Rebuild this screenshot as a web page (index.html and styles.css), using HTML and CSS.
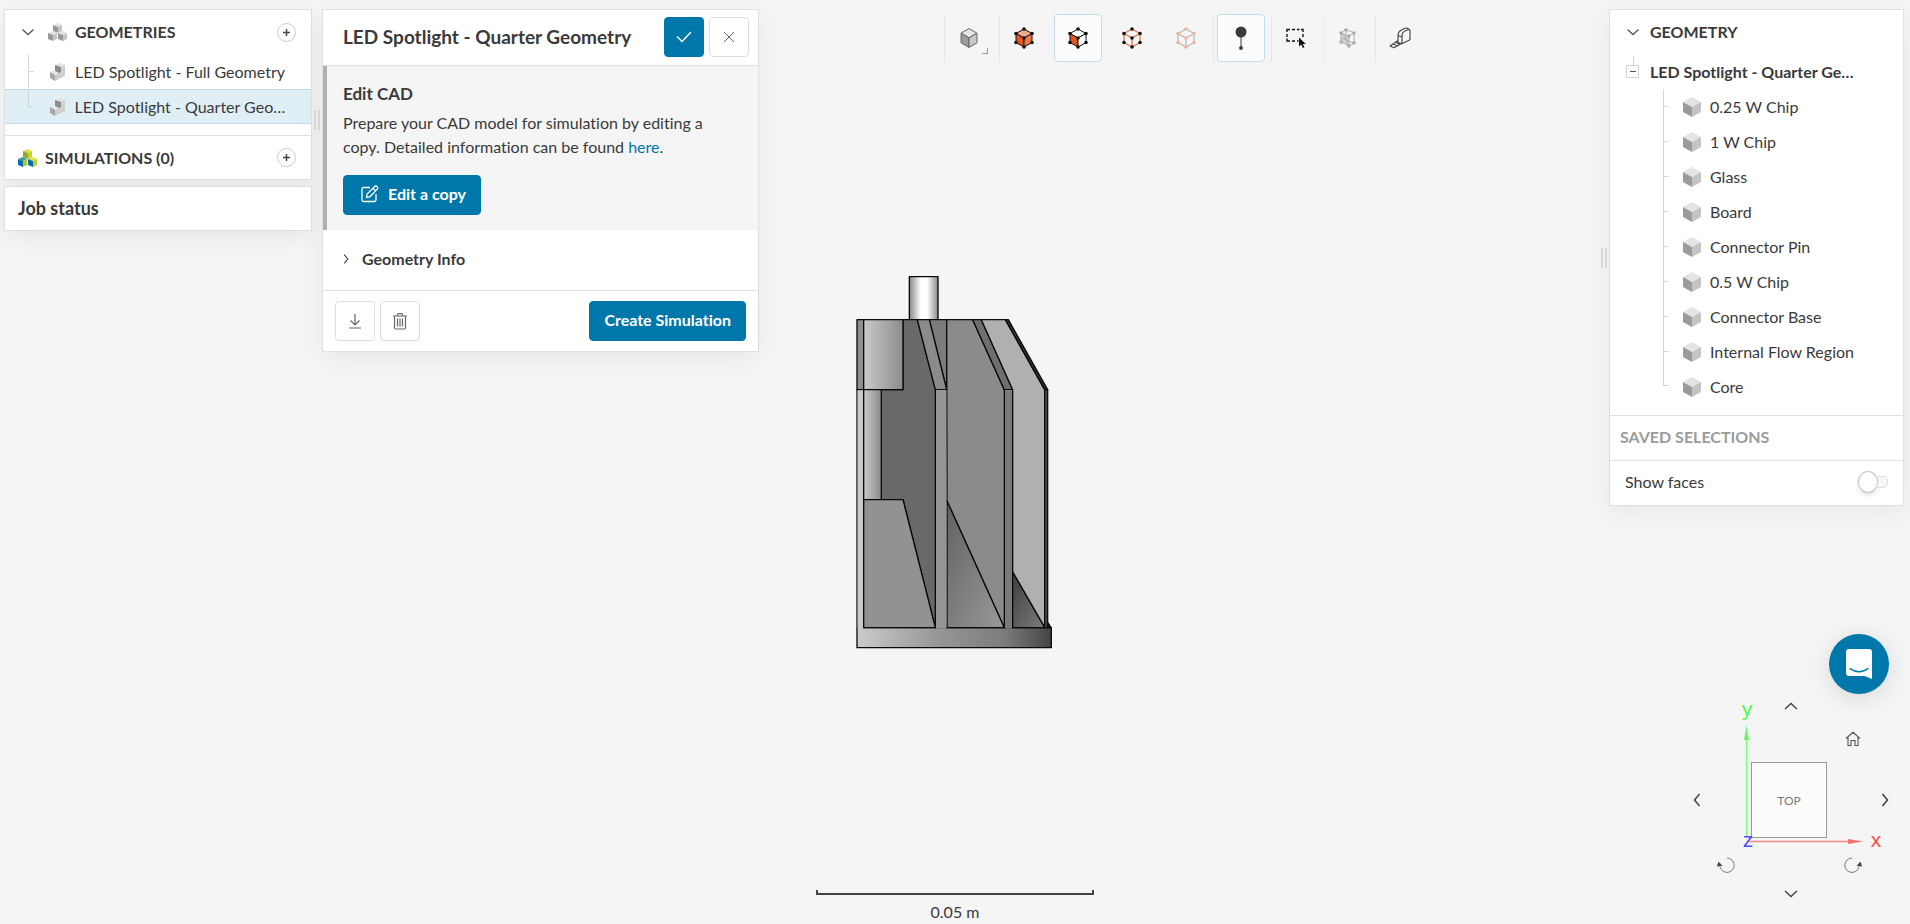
FILE: index.html
```html
<!DOCTYPE html>
<html lang="en">

<head>
  <meta charset="UTF-8">
  <meta name="viewport" content="width=device-width, initial-scale=1" />
  <title>LED Spotlight - Workbench</title>
  <link rel="stylesheet" href="styles.css">
</head>

<body>
  <!-- shared icon shapes -->
  <svg class="defs" width="0" height="0" aria-hidden="true">
    <symbol id="cube" viewBox="0 0 18 20">
      <path d="M9 0l9 5-9 5-9-5z" fill="#e4e4e4" />
      <path d="M0 5l9 5v10l-9-5z" fill="#9b9b9b" />
      <path d="M18 5l-9 5v10l9-5z" fill="#c4c4c4" />
    </symbol>
    <symbol id="part" viewBox="0 0 15 18">
      <path d="M5 2l5-2 5 2-4 2z" fill="#e2e2e2" />
      <path d="M5 2l6 2v6l-2 1-4-2z" fill="#8c8c8c" />
      <path d="M0 9l4-1.500 5 2.500-4 2z" fill="#e6e6e6" />
      <path d="M0 9l5 3v6l-5-3z" fill="#a8a8a8" />
      <path d="M15 2v11L5 18v-6l6-3V4z" fill="#cfcfcf" />
    </symbol>
    <symbol id="chev-down" viewBox="0 0 14 8">
      <path d="M1.500 1.500l5.500 5 5.500-5" fill="none" stroke="currentColor" stroke-width="1.300" />
    </symbol>
    <symbol id="chev-right" viewBox="0 0 8 14">
      <path d="M1.500 1l5 6-5 6" fill="none" stroke="currentColor" stroke-width="1.500" />
    </symbol>
  </svg>

  <main class="workbench">
    <section class="scene">
      <svg class="model" viewBox="78 47 594 1119" role="img" aria-label="Quarter geometry">
        <defs>
          <linearGradient id="g-pin"><stop offset="0" stop-color="#858585" /><stop offset=".4" stop-color="#fff" /><stop offset=".62" stop-color="#fff" /><stop offset="1" stop-color="#8a8a8a" /></linearGradient>
          <linearGradient id="g-cyl"><stop offset="0" stop-color="#cacaca" /><stop offset="1" stop-color="#8c8c8c" /></linearGradient>
          <linearGradient id="g-base"><stop offset="0" stop-color="#cbcbcb" /><stop offset=".4" stop-color="#989898" /><stop offset=".75" stop-color="#7d7d7d" /><stop offset="1" stop-color="#454545" /></linearGradient>
          <linearGradient id="g-tri" x2="1" y2="1"><stop offset="0" stop-color="#626262" /><stop offset="1" stop-color="#999" /></linearGradient>
          <linearGradient id="g-tri2" x2="1" y2="1"><stop offset="0" stop-color="#3e3e3e" /><stop offset="1" stop-color="#7c7c7c" /></linearGradient>
        </defs>
        <g stroke="#0a0a0a" stroke-width="4" stroke-linejoin="round">
          <path d="M238 49h86v129h-86z" fill="url(#g-pin)" />
          <path d="M81 388h20v714h563v60H81z" fill="url(#g-base)" />
          <path d="M81 178h20v210H81z" fill="#8f8f8f" />
          <path d="M219 178h43l54 210v714l-97-384h-65V388h65z" fill="#696969" />
          <path d="M101 178h118v210H101z" fill="url(#g-cyl)" />
          <path d="M101 388h53v330h-53z" fill="url(#g-cyl)" />
          <path d="M101 718h118l97 384H101z" fill="#929292" />
          <path d="M298 178h52v210z" fill="#7b7b7b" />
          <path d="M262 178h36l52 210h-34z" fill="#8b8b8b" />
          <path d="M350 178h78l95 210v714L351 722z" fill="#8b8b8b" />
          <path d="M351 722l172 380H351z" fill="url(#g-tri)" />
          <path d="M428 178h26l94 210h-25z" fill="#6f6f6f" />
          <path d="M454 178h72l118 210v714l-96-167V388z" fill="#b0b0b0" />
          <path d="M548 935l96 167h-96z" fill="url(#g-tri2)" />
          <path d="M526 178h9l118 210h-9z" fill="#333" />
          <path d="M644 388h9v714h-9z" fill="#4c4c4c" />
          <path d="M653 1086l10 16h-10z" fill="#222" />
        </g>
        <path d="M318 390h31v714h-31z" fill="#959595" />
        <path d="M525 390h21v714h-21z" fill="#7a7a7a" />
        <path d="M83 390h16v714H83z" fill="#c9c9c9" />
      </svg>

      <div class="scale">
        <div class="scale-bar"></div>
        <div>0.05 m</div>
      </div>
    </section>

    <div class="overlay">
      <aside class="side left-side">
        <div class="side-column">
          <nav class="panel">
            <div class="tree-head">
              <button class="plain fold" aria-label="Collapse geometries"><svg width="14" height="8"><use href="#chev-down" /></svg></button>
              <svg class="group-icon" width="19" height="18" viewBox="0 0 19 18">
                <path d="M5 2l5-2 4 2-4 2z" fill="#e3e3e3" /><path d="M5 2l5 2v6L5 8z" fill="#999" /><path d="M14 2v6l-4 2V4z" fill="#c4c4c4" />
                <path d="M0 10l5-2 4 2-4 2z" fill="#e3e3e3" /><path d="M0 10l5 2v6l-5-2z" fill="#999" /><path d="M9 10v6l-4 2v-6z" fill="#c4c4c4" />
                <path d="M10 10l5-2 4 2-4 2z" fill="#e3e3e3" /><path d="M10 10l5 2v6l-5-2z" fill="#999" /><path d="M19 10v6l-4 2v-6z" fill="#c4c4c4" />
              </svg>
              <span class="caption">GEOMETRIES</span>
              <button class="add" aria-label="Add geometry"><svg width="7" height="7" viewBox="0 0 7 7"><path d="M3.500 0v7M0 3.500h7" stroke="#444" stroke-width="1.500" /></svg></button>
            </div>
            <ul class="tree geometries">
              <li><span class="branch"></span><svg class="part-icon" width="15" height="18"><use href="#part" /></svg><span class="name">LED Spotlight - Full Geometry</span></li>
              <li class="selected"><span class="branch"></span><svg class="part-icon" width="15" height="18"><use href="#part" /></svg><span class="name">LED Spotlight - Quarter Geometry</span></li>
            </ul>
            <div class="tree-head simulations">
              <svg class="group-icon" width="19" height="18" viewBox="0 0 19 18">
                <path d="M5 2l5-2 4 2-4 2z" fill="#e0e04c" /><path d="M5 2l5 2v6L5 8z" fill="#8dae2c" /><path d="M14 2v6l-4 2V4z" fill="#c9d32b" />
                <path d="M0 10l5-2 4 2-4 2z" fill="#3f9c8c" /><path d="M0 10l5 2v6l-5-2z" fill="#0a6ea8" /><path d="M9 10v6l-4 2v-6z" fill="#b3c92f" />
                <path d="M10 10l5-2 4 2-4 2z" fill="#dfe04a" /><path d="M10 10l5 2v6l-5-2z" fill="#0a6ea8" /><path d="M19 10v6l-4 2v-6z" fill="#c0cd2e" />
              </svg>
              <span class="caption">SIMULATIONS (0)</span>
              <button class="add" aria-label="Add simulation"><svg width="7" height="7" viewBox="0 0 7 7"><path d="M3.500 0v7M0 3.500h7" stroke="#444" stroke-width="1.500" /></svg></button>
            </div>
          </nav>
          <div class="panel job-status">Job status</div>
        </div>
        <div class="splitter"></div>
      </aside>

      <section class="panel details">
        <header class="details-head">
          <h1>LED Spotlight - Quarter Geometry</h1>
          <button class="btn primary square" aria-label="Apply"><svg width="16" height="12" viewBox="0 0 16 12"><path d="M1 5.500l5 5L15 1" fill="none" stroke="#fff" stroke-width="1.400" /></svg></button>
          <button class="btn square" aria-label="Close"><svg width="12" height="12" viewBox="0 0 12 12"><path d="M1 1l10 10M11 1L1 11" stroke="#666" /></svg></button>
        </header>
        <div class="edit-cad">
          <h2>Edit CAD</h2>
          <p>Prepare your CAD model for simulation by editing a copy. Detailed information can be found <a href="#">here</a>.</p>
          <button class="btn primary edit-btn">
            <svg width="18" height="18" viewBox="0 0 18 18" fill="none" stroke="#fff" stroke-width="1.300"><path d="M9 2.500H2.500a1.500 1.500 0 0 0-1.500 1.500v11a1.500 1.500 0 0 0 1.500 1.500h11a1.500 1.500 0 0 0 1.500-1.500V9M5.500 12.500l.6-3.400L13.700 1.500a1.500 1.500 0 0 1 2.200 0l.4.400a1.500 1.500 0 0 1 0 2.200L8.800 11.800zM12 3.200l2.600 2.600" /></svg>
            Edit a copy
          </button>
        </div>
        <button class="plain info-row">
          <svg width="6" height="10"><use href="#chev-right" /></svg>
          Geometry Info
        </button>
        <footer class="details-foot">
          <button class="btn square" aria-label="Download"><svg width="14" height="15" viewBox="0 0 14 15" fill="none" stroke="#666" stroke-width="1.200"><path d="M7 0v10.500M2.500 6.500L7 11l4.500-4.500M1 14h12" /></svg></button>
          <button class="btn square" aria-label="Delete"><svg width="14" height="17" viewBox="0 0 14 17" fill="none" stroke="#666" stroke-width="1.200"><path d="M0 3h14M4.500 3V1.600a1 1 0 0 1 1-1h3a1 1 0 0 1 1 1V3M1.500 3v11.500a1.500 1.500 0 0 0 1.500 1.500h8a1.500 1.500 0 0 0 1.500-1.500V3M4.500 5.500v8M7 5.500v8M9.500 5.500v8" /></svg></button>
          <button class="btn primary create-btn">Create Simulation</button>
        </footer>
      </section>

      <div class="toolbar" role="toolbar" aria-label="View tools">
        <div class="tool-group">
          <button class="tool menu" aria-label="Render mode">
            <svg width="18" height="20" viewBox="0 0 18 20" stroke="#666" stroke-linejoin="round"><path d="M9 .6l8 4.600-8 4.600-8-4.600z" fill="#e6e6e6" /><path d="M1 5.200l8 4.600v9.600l-8-4.600z" fill="#9c9c9c" /><path d="M17 5.200L9 9.800v9.600l8-4.600z" fill="#c8c8c8" /></svg>
          </button>
        </div>
        <div class="tool-group tight">
          <button class="tool" aria-label="Select volumes">
            <svg width="20" height="22" viewBox="0 0 20 22"><g stroke="#111"><path d="M10 2l8 4.500-8 4.500-8-4.500z" fill="#f3ab85" /><path d="M2 6.500l8 4.500v9l-8-4.500z" fill="#e2561b" /><path d="M18 6.500L10 11v9l8-4.500z" fill="#ee7b45" /></g><g fill="#111"><circle cx="10" cy="2" r="1.800" /><circle cx="2" cy="6.500" r="1.800" /><circle cx="18" cy="6.500" r="1.800" /><circle cx="10" cy="11" r="1.800" /><circle cx="2" cy="15.500" r="1.800" /><circle cx="18" cy="15.500" r="1.800" /><circle cx="10" cy="20" r="1.800" /></g></svg>
          </button>
          <button class="tool active" aria-label="Select faces">
            <svg width="20" height="22" viewBox="0 0 20 22"><g stroke="#111"><path d="M10 2l8 4.500-8 4.500-8-4.500z" fill="#fff" /><path d="M2 6.500l8 4.500v9l-8-4.500z" fill="#e2561b" /><path d="M18 6.500L10 11v9l8-4.500z" fill="#fff" /></g><g fill="#111"><circle cx="10" cy="2" r="1.800" /><circle cx="2" cy="6.500" r="1.800" /><circle cx="18" cy="6.500" r="1.800" /><circle cx="10" cy="11" r="1.800" /><circle cx="2" cy="15.500" r="1.800" /><circle cx="18" cy="15.500" r="1.800" /><circle cx="10" cy="20" r="1.800" /></g></svg>
          </button>
          <button class="tool" aria-label="Select edges">
            <svg width="20" height="22" viewBox="0 0 20 22"><path d="M10 2l8 4.500v9L10 20l-8-4.500v-9zM2 6.500l8 4.500 8-4.500M10 11v9" fill="none" stroke="#e2703f" stroke-width="1.200" /><g fill="#111"><circle cx="10" cy="2" r="1.800" /><circle cx="2" cy="6.500" r="1.800" /><circle cx="18" cy="6.500" r="1.800" /><circle cx="10" cy="11" r="1.800" /><circle cx="2" cy="15.500" r="1.800" /><circle cx="18" cy="15.500" r="1.800" /><circle cx="10" cy="20" r="1.800" /></g></svg>
          </button>
          <button class="tool" aria-label="Select vertices" disabled>
            <svg width="20" height="22" viewBox="0 0 20 22"><path d="M10 2l8 4.500v9L10 20l-8-4.500v-9zM2 6.500l8 4.500 8-4.500M10 11v9" fill="none" stroke="#b5b5b5" stroke-width="1.200" /><g fill="#f3b49b"><circle cx="10" cy="2" r="1.800" /><circle cx="2" cy="6.500" r="1.800" /><circle cx="18" cy="6.500" r="1.800" /><circle cx="10" cy="11" r="1.800" /><circle cx="2" cy="15.500" r="1.800" /><circle cx="18" cy="15.500" r="1.800" /><circle cx="10" cy="20" r="1.800" /></g></svg>
          </button>
        </div>
        <div class="tool-group probe">
          <button class="tool active" aria-label="Pick point">
            <svg width="12" height="24" viewBox="0 0 12 24" fill="#3a3a3a"><circle cx="6" cy="6" r="5.500" /><path d="M5.500 10h1v12h-1z" /><circle cx="6" cy="22" r="1.900" /></svg>
          </button>
        </div>
        <div class="tool-group tight">
          <button class="tool" aria-label="Box select">
            <svg width="20" height="20" viewBox="0 0 20 20"><path d="M1 4V1.500h3M6 1.500h3M11 1.500h2.500M15 1.500h2V4M17 6v3M1 6v3M1 10.500V13h3M6 13h3M11 13h1.500" fill="none" stroke="#111" stroke-width="1.400" /><path d="M13 9.500v9l2.200-2 1.700 3.500 1.500-.700-1.600-3.400h3z" fill="#111" /></svg>
          </button>
        </div>
        <div class="tool-group tight">
          <button class="tool" aria-label="Clip geometry" disabled>
            <svg width="18" height="20" viewBox="0 0 18 20" stroke="#b0b0b0"><path d="M2 5l8 3v10l-8-4z" fill="#d4d4d4" /><path d="M2 5l5-3.500 8 3.500v10l-5 3M10 8l5-3M4 6l5 10M2 10l8 3M7 2v10l8 3" fill="none" /><g fill="#a8a8a8" stroke="none"><circle cx="7" cy="2" r="1.700" /><circle cx="2" cy="5" r="1.700" /><circle cx="15" cy="5" r="1.700" /><circle cx="10" cy="8" r="1.700" /><circle cx="2" cy="14" r="1.700" /><circle cx="15" cy="15" r="1.700" /><circle cx="10" cy="18" r="1.700" /></g></svg>
          </button>
        </div>
        <div class="tool-group tight">
          <button class="tool" aria-label="Measure">
            <svg width="22" height="22" viewBox="0 0 22 22" fill="none" stroke="#4a4a4a" stroke-width="1.200" stroke-linejoin="round"><path d="M9 15.500V8.500C9 6 10.500 4 12.500 3L16 1.300c1-.400 1.600-.400 2.300 0L20 2.300c.7.500 1 1 1 2v8.500l-8 4zM13 16.800V9c0-2.500 1.500-4.300 3.500-5.200l3-1.300M9 13.500L1 19l4 1.800 8-4.500M4 17l4 1.800M6.500 15.300l4 1.800M9 8.500L13 10" /></svg>
          </button>
        </div>
      </div>

      <aside class="right">
        <div class="side">
          <div class="splitter"></div>
          <div class="panel side-column">
            <div class="tree-head">
              <button class="plain fold" aria-label="Collapse geometry"><svg width="14" height="8"><use href="#chev-down" /></svg></button>
              <span class="caption">GEOMETRY</span>
            </div>
            <div class="root">
              <button class="plain minus" aria-label="Collapse LED Spotlight"></button>
              <span class="name">LED Spotlight - Quarter Geometry</span>
            </div>
            <ul class="tree bodies">
              <li><span class="branch"></span><svg class="body-icon" width="18" height="20"><use href="#cube" /></svg>0.25 W Chip</li>
              <li><span class="branch"></span><svg class="body-icon" width="18" height="20"><use href="#cube" /></svg>1 W Chip</li>
              <li><span class="branch"></span><svg class="body-icon" width="18" height="20"><use href="#cube" /></svg>Glass</li>
              <li><span class="branch"></span><svg class="body-icon" width="18" height="20"><use href="#cube" /></svg>Board</li>
              <li><span class="branch"></span><svg class="body-icon" width="18" height="20"><use href="#cube" /></svg>Connector Pin</li>
              <li><span class="branch"></span><svg class="body-icon" width="18" height="20"><use href="#cube" /></svg>0.5 W Chip</li>
              <li><span class="branch"></span><svg class="body-icon" width="18" height="20"><use href="#cube" /></svg>Connector Base</li>
              <li><span class="branch"></span><svg class="body-icon" width="18" height="20"><use href="#cube" /></svg>Internal Flow Region</li>
              <li><span class="branch"></span><svg class="body-icon" width="18" height="20"><use href="#cube" /></svg>Core</li>
            </ul>
            <div class="saved">SAVED SELECTIONS</div>
            <div class="faces">
              <label for="show-faces">Show faces</label>
              <input id="show-faces" class="switch" type="checkbox" role="switch" />
            </div>
          </div>
        </div>

        <div class="corner">
          <button class="chat" aria-label="Open chat">
            <svg width="26" height="30" viewBox="0 0 26 30"><path d="M3 0h20a3 3 0 0 1 3 3v27l-7.500-3H3a3 3 0 0 1-3-3V3a3 3 0 0 1 3-3z" fill="#fff" /><path d="M4 19.500c5.500 4.300 12.500 4.300 18 0" fill="none" stroke="#0077aa" stroke-width="1.500" stroke-linecap="round" /></svg>
          </button>
          <div class="orient">
            <svg class="axes" width="218" height="200" viewBox="0 0 218 200">
              <rect x="66.500" y="62.500" width="75" height="75" fill="#fcfcfc" stroke="#999" />
              <text class="face-label" x="104" y="105">TOP</text>
              <path d="M61.500 137V34" stroke="#80ff80" stroke-width="1.500" />
              <path d="M61.500 25l2.500 15h-5z" fill="#6af56a" />
              <path d="M64 141.500h103" stroke="#ff8888" stroke-width="1.500" />
              <path d="M178 141.500l-15 2.500v-5z" fill="#f87272" />
              <text class="axis y" x="62" y="16">y</text>
              <text class="axis z" x="63" y="147">z</text>
              <text class="axis x" x="191" y="147">x</text>
            </svg>
            <button class="plain up" aria-label="Rotate up"><svg width="14" height="8" viewBox="0 0 14 8"><path d="M1 7l6-5.500L13 7" fill="none" stroke="#444" stroke-width="1.400" /></svg></button>
            <button class="plain home" aria-label="Home view"><svg width="16" height="16" viewBox="0 0 16 16"><path d="M1 7.500L8 1.300l7 6.200M3 6.200V14.500h3V9.500h4v5h3V6.200" fill="none" stroke="#555" stroke-width="1.100" /></svg></button>
            <button class="plain left" aria-label="Rotate left"><svg width="8" height="14" viewBox="0 0 8 14"><path d="M6.500 1l-5 6 5 6" fill="none" stroke="#444" stroke-width="1.500" /></svg></button>
            <button class="plain turn-right" aria-label="Rotate right"><svg width="8" height="14"><use href="#chev-right" /></svg></button>
            <button class="plain roll ccw" aria-label="Roll counterclockwise"><svg width="18" height="17" viewBox="0 0 18 17"><path d="M10 1a7.200 7.200 0 1 1-7 9" fill="none" stroke="#777" /><path d="M1.500 4.500l4 4.500-5.500.500z" fill="#444" /></svg></button>
            <button class="plain roll cw" aria-label="Roll clockwise"><svg width="18" height="17" viewBox="0 0 18 17"><path d="M8 1a7.200 7.200 0 1 0 7 9" fill="none" stroke="#777" /><path d="M16.500 4.500l-4 4.500 5.500.500z" fill="#444" /></svg></button>
            <button class="plain down" aria-label="Rotate down"><svg width="14" height="8" viewBox="0 0 14 8"><path d="M1 1l6 5.500L13 1" fill="none" stroke="#444" stroke-width="1.400" /></svg></button>
          </div>
        </div>
      </aside>
    </div>
  </main>
</body>

</html>
```
FILE: styles.css
```css
* {
  box-sizing: border-box;
  margin: 0;
  padding: 0;
}

body {
  background-color: #f5f5f5;
  color: #3a3a3a;
  font-family: Lato, "Open Sans", sans-serif;
  font-size: 16px;
  font-variant-ligatures: none;
  line-height: 24px;
}

button {
  font: inherit;
  font-variant-ligatures: none;
  color: inherit;
  cursor: pointer;
}

svg {
  display: block;
  flex: none;
}

ul {
  list-style: none;
}

.defs {
  position: absolute;
}

.plain {
  border: none;
  background: none;
}

/* the scene fills the window, the panels share its grid cell */
.workbench {
  display: grid;
  min-height: 100vh;
}

.scene,
.overlay {
  grid-area: 1 / 1;
}

.scene {
  display: grid;
  justify-items: center;
}

.model,
.scale {
  grid-area: 1 / 1;
}

.model {
  width: 198px;
  align-self: center;
}

.scale {
  align-self: end;
  width: 278px;
  text-align: center;
}

.scale-bar {
  height: 5px;
  margin-bottom: 5px;
  border: 2px solid #444;
  border-top: none;
}

.overlay {
  display: grid;
  grid-template-columns: minmax(240px, 318px) minmax(340px, 437px) 1fr minmax(240px, 303px);
  align-items: start;
  padding: 9px 6px 0 4px;
}

.panel {
  background-color: #fff;
  border: 1px solid #e0e0e0;
  box-shadow: 0 6px 24px rgba(0, 0, 0, 0.06);
}

.side {
  display: flex;
  align-items: center;
  gap: 2px;
}

.left-side {
  padding-right: 2px;
}

.side-column {
  flex: 1;
  min-width: 0;
}

.splitter {
  width: 6px;
  height: 20px;
  border: 2px solid #dcdcdc;
  border-width: 0 2px;
}

/* trees */
.tree-head {
  display: flex;
  align-items: center;
  height: 44px;
  padding: 0 15px 0 16px;
}

.fold {
  display: flex;
  width: 14px;
  color: #555;
}

.tree-head .group-icon {
  margin: 0 8px 0 13px;
}

.caption {
  flex: 1;
  font-weight: 700;
}

.add {
  display: flex;
  align-items: center;
  justify-content: center;
  width: 19px;
  height: 19px;
  border: 1px solid #ccc;
  border-radius: 50%;
  background-color: #fff;
}

.tree {
  padding-bottom: 11px;
}

.tree li {
  display: flex;
  align-items: center;
  height: 35px;
}

.geometries li {
  padding: 0 20px 0 23px;
  border: 1px solid transparent;
  border-width: 1px 0;
}

.geometries li.selected {
  background-color: #e0eff6;
  border-color: #bfdde6;
}

.branch {
  align-self: stretch;
  width: 6px;
  border-left: 1px solid #d4d4d4;
  background: linear-gradient(#d9d9d9, #d9d9d9) 0 50% / 6px 1px no-repeat;
}

.tree li:last-child .branch {
  align-self: flex-start;
  height: 17px;
  border-bottom: 1px solid #d4d4d4;
  background: none;
}

.part-icon {
  margin: 0 10px 0 16px;
}

.name {
  overflow: hidden;
  white-space: nowrap;
  text-overflow: ellipsis;
}

.simulations {
  border-top: 1px solid #e0e0e0;
  padding-left: 13px;
}

.simulations .group-icon {
  margin-left: 0;
}

.job-status {
  margin-top: 6px;
  padding: 9px 13px 10px;
  font-size: 18px;
  font-weight: 700;
}

/* geometry details */
.details-head {
  display: flex;
  align-items: center;
  gap: 5px;
  padding: 7px 9px 8px 20px;
  border-bottom: 1px solid #e0e0e0;
}

.details-head h1 {
  flex: 1;
  font-size: 19px;
}

.btn {
  display: flex;
  align-items: center;
  justify-content: center;
  height: 40px;
  padding: 0 14px 2px;
  border: 1px solid #ddd;
  border-radius: 4px;
  background-color: #fff;
  font-weight: 700;
}

.btn.square {
  width: 40px;
  padding: 0;
}

.btn.primary {
  border-color: #0077aa;
  background-color: #0077aa;
  color: #fff;
}

.edit-cad {
  padding: 16px 40px 15px 16px;
  border-left: 4px solid #b0b0b0;
  background-color: #f5f5f5;
}

.edit-cad h2 {
  margin-bottom: 5px;
  font-size: 17px;
}

.edit-cad a {
  color: #0077aa;
  text-decoration: none;
}

.edit-cad .edit-btn {
  gap: 9px;
  margin-top: 16px;
  padding-left: 17px;
}

.info-row {
  display: flex;
  align-items: center;
  gap: 13px;
  width: 100%;
  height: 60px;
  padding: 0 20px 2px;
  font-weight: 700;
}

.details-foot {
  display: flex;
  gap: 5px;
  padding: 10px 12px;
  border-top: 1px solid #e0e0e0;
}

.create-btn {
  margin-left: auto;
}

/* toolbar */
.toolbar {
  display: flex;
  justify-content: center;
  padding: 5px 0 0 10px;
}

.tool-group {
  display: flex;
  gap: 6px;
  padding-right: 6px;
  border-left: 1px solid #e8e8e8;
}

.tool-group.tight {
  padding-right: 3px;
}

.probe {
  padding-left: 3px;
}

.tool {
  display: flex;
  align-items: center;
  justify-content: center;
  width: 48px;
  height: 48px;
  border: 1px solid transparent;
  border-radius: 4px;
  background: none;
}

.tool.active {
  border-color: #c3dcea;
  background-color: #fcfcfc;
}

.tool.menu {
  position: relative;
}

.tool.menu::after {
  content: "";
  position: absolute;
  right: 4px;
  bottom: 7px;
  width: 5px;
  height: 5px;
  border: 1px solid #999;
  border-width: 0 1px 1px 0;
}

/* scene tree on the right */
.right {
  display: flex;
  flex-direction: column;
  justify-content: space-between;
  align-self: stretch;
}

.right .tree-head {
  gap: 10px;
}

.root {
  display: flex;
  align-items: center;
  gap: 11px;
  height: 35px;
  padding: 0 45px 0 16px;
  background: linear-gradient(#d4d4d4, #d4d4d4) 23px 2px / 1px 9px no-repeat;
  font-weight: 700;
}

.minus {
  flex: none;
  width: 13px;
  height: 13px;
  border: 1px solid #d4d4d4;
  background: linear-gradient(#555, #555) center / 6px 1px no-repeat;
}

.bodies {
  padding-left: 53px;
}

.body-icon {
  margin: 0 9px 0 14px;
}

.saved {
  padding: 9px 10px 11px;
  border-top: 1px solid #e0e0e0;
  color: #9b9b9b;
  font-weight: 700;
}

.faces {
  display: flex;
  align-items: center;
  justify-content: space-between;
  padding: 9px 15px 11px;
  border-top: 1px solid #e0e0e0;
}

.switch {
  appearance: none;
  display: flex;
  align-items: center;
  width: 30px;
  height: 20px;
}

.switch::before {
  content: "";
  width: 20px;
  height: 20px;
  border: 1px solid #c4c4c4;
  border-radius: 50%;
  background-color: #fff;
  box-shadow: 0 2px 4px rgba(0, 0, 0, 0.12);
}

.switch::after {
  content: "";
  width: 10px;
  height: 10px;
  border: 1px solid #ddd;
  border-left: none;
  border-radius: 0 5px 5px 0;
  background-color: #f5f5f5;
}

/* chat and view cube */
.corner {
  display: flex;
  flex-direction: column;
  align-items: flex-end;
  gap: 6px;
  padding: 24px 1px;
}

.chat {
  display: flex;
  align-items: center;
  justify-content: center;
  width: 60px;
  height: 60px;
  margin-right: 14px;
  border: none;
  border-radius: 50%;
  background-color: #0077aa;
  box-shadow: 0 4px 24px rgba(0, 0, 0, 0.12);
}

.orient {
  display: grid;
  grid-template-columns: 24px 34px 96px 28px 36px;
  grid-template-rows: 12px 54px 68px 54px 12px;
}

.orient .plain {
  display: flex;
  align-items: center;
  justify-content: center;
}

.axes {
  grid-area: 1 / 1 / -1 / -1;
  overflow: visible;
}

.face-label {
  fill: #777;
  font-size: 12px;
  text-anchor: middle;
}

.axis {
  font-family: "Liberation Sans", sans-serif;
  font-size: 21px;
  text-anchor: middle;
}

.axis.x {
  fill: #ff4a4a;
}

.axis.y {
  fill: #4aff4a;
}

.axis.z {
  fill: #4a4aff;
}

.up {
  grid-area: 1 / 3;
}

.home {
  grid-area: 2 / 4;
}

.left {
  grid-area: 3 / 1;
}

.turn-right {
  grid-area: 3 / 5;
}

.orient .roll {
  padding-top: 8px;
}

.ccw {
  grid-area: 4 / 2;
}

.cw {
  grid-area: 4 / 4;
}

.down {
  grid-area: 5 / 3;
}
```
